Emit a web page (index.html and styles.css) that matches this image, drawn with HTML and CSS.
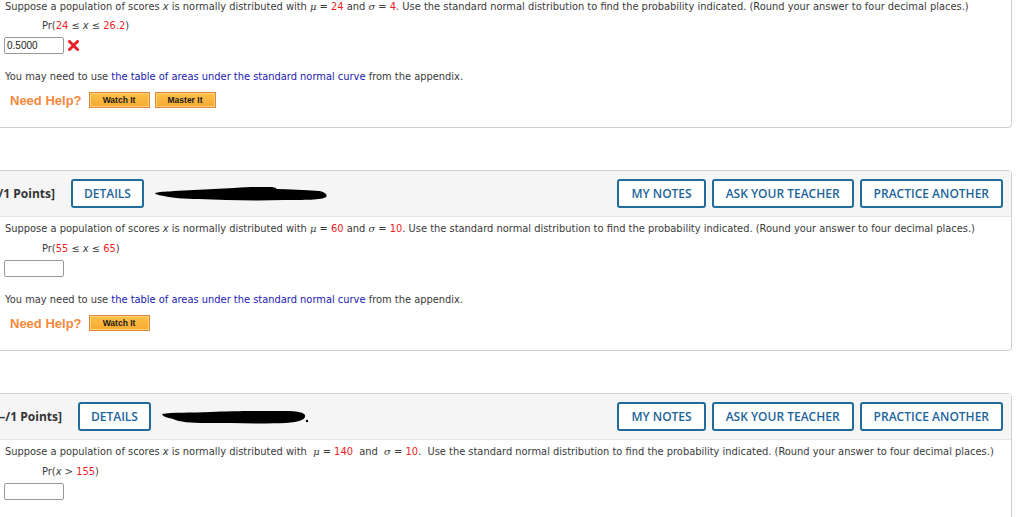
FILE: index.html
```html
<!DOCTYPE html>
<html>
<head>
<meta charset="utf-8">
<link rel="stylesheet" href="styles.css">
</head>
<body>
<div class="page">
  <section class="card card-first">
    <div class="body">
      <p class="q">Suppose a population of scores <i>x</i> is normally distributed with <i class="gr">μ</i> = <span class="red">24</span> and <i class="gr">σ</i> = <span class="red">4</span>. Use the standard normal distribution to find the probability indicated. (Round your answer to four decimal places.)</p>
      <p class="pr">Pr(<span class="red">24</span> ≤ <i>x</i> ≤ <span class="red">26.2</span>)</p>
      <div class="answer-row">
        <div class="answer">0.5000</div>
        <svg class="wrong" width="11" height="11" viewBox="0 0 11 11"><path d="M1.5 1.5 L9.5 9.5 M9.5 1.5 L1.5 9.5" stroke="#e8202a" stroke-width="3" stroke-linecap="round"/></svg>
      </div>
      <p class="note">You may need to use <a class="lnk">the table of areas under the standard normal curve</a> from the appendix.</p>
      <div class="help">
        <span class="help-label">Need Help?</span>
        <span class="hbtn">Watch It</span>
        <span class="hbtn">Master It</span>
      </div>
    </div>
  </section>

  <section class="card">
    <header class="head">
      <span class="points">8. [–/1 Points]</span>
      <span class="obtn details">DETAILS</span>
      <svg class="scribble" width="174" height="18" viewBox="0 0 174 18"><path d="M1 8 C8 6 14 7 20 6 C40 5 60 4 80 3 C95 2 105 2 115 2 C120 2 124 3 122 4 C135 4 150 5 165 6 C171 7 174 10 172 12 C168 15 150 15 130 15 C100 16 70 15 45 14 C30 14 18 13 10 11 C6 10 2 10 1 8 Z" fill="#000"/></svg>
      <span class="spacer"></span>
      <span class="obtn">MY NOTES</span>
      <span class="obtn">ASK YOUR TEACHER</span>
      <span class="obtn">PRACTICE ANOTHER</span>
    </header>
    <div class="body">
      <p class="q">Suppose a population of scores <i>x</i> is normally distributed with <i class="gr">μ</i> = <span class="red">60</span> and <i class="gr">σ</i> = <span class="red">10</span>. Use the standard normal distribution to find the probability indicated. (Round your answer to four decimal places.)</p>
      <p class="pr">Pr(<span class="red">55</span> ≤ <i>x</i> ≤ <span class="red">65</span>)</p>
      <div class="answer-row">
        <div class="answer"></div>
      </div>
      <p class="note">You may need to use <a class="lnk">the table of areas under the standard normal curve</a> from the appendix.</p>
      <div class="help">
        <span class="help-label">Need Help?</span>
        <span class="hbtn">Watch It</span>
      </div>
    </div>
  </section>

  <section class="card card-last">
    <header class="head">
      <span class="points points-wide">9. [–/1 Points]</span>
      <span class="obtn details">DETAILS</span>
      <svg class="scribble" width="150" height="18" viewBox="0 0 150 18"><path d="M1 6 C10 4 30 5 50 4 C70 3 100 3 125 3 C135 3 142 4 144 7 C145 11 140 14 125 15 C100 16 70 15 45 15 C30 15 18 14 12 11 C8 10 2 9 1 6 Z" fill="#000"/><circle cx="146" cy="13" r="1.2" fill="#000"/></svg>
      <span class="spacer"></span>
      <span class="obtn">MY NOTES</span>
      <span class="obtn">ASK YOUR TEACHER</span>
      <span class="obtn">PRACTICE ANOTHER</span>
    </header>
    <div class="body">
      <p class="q">Suppose a population of scores <i>x</i> is normally distributed with &nbsp;<i class="gr">μ</i> = <span class="red">140</span> &nbsp;and &nbsp;<i class="gr">σ</i> = <span class="red">10</span>. &nbsp;Use the standard normal distribution to find the probability indicated. (Round your answer to four decimal places.)</p>
      <p class="pr">Pr(<i>x</i> &gt; <span class="red">155</span>)</p>
      <div class="answer-row">
        <div class="answer"></div>
      </div>
    </div>
  </section>
</div>
</body>
</html>
```

FILE: styles.css
```css
html, body {
  margin: 0;
  padding: 0;
  background: #fff;
  overflow: hidden;
}
body {
  font-family: "DejaVu Sans", Verdana, sans-serif;
  color: #3a3a3a;
}
.page {
  display: flex;
  flex-direction: column;
}
.card {
  margin: 42px 12px 0 -10px;
  border: 1px solid #cfcfcf;
  border-radius: 4px;
  background: #fff;
}
.card-first {
  margin-top: -5px;
  border-top: none;
}
.head {
  display: flex;
  align-items: center;
  height: 45px;
  background: #f5f5f5;
  border-bottom: 1px solid #e4e4e4;
  padding: 0 8px 0 0;
  font-family: "Open Sans", sans-serif;
}
.points {
  font-weight: 700;
  font-size: 12px;
  color: #333;
  margin-left: -16px;
  white-space: nowrap;
}
.points-wide {
  margin-left: -9px;
}
.obtn {
  display: inline-flex;
  align-items: center;
  justify-content: center;
  height: 25px;
  padding: 0 12px;
  border: 2px solid #1f6c9c;
  border-radius: 3px;
  color: #1c659a;
  font-weight: 600;
  font-size: 12px;
  background: #fff;
  margin-left: 6px;
  white-space: nowrap;
}
.obtn.details {
  margin-left: 16px;
  padding: 0 11px;
}
.scribble {
  margin-left: 10px;
  display: block;
}
.spacer {
  flex: 1;
}
.body {
  padding: 4px 0 19px 14px;
}
.card-last .body {
  padding-bottom: 40px;
}
.q, .pr, .note {
  margin: 0;
  font-size: 9.9px;
  line-height: 16px;
  white-space: nowrap;
}
.pr {
  margin-top: 4px;
  padding-left: 37px;
}
.card-first .pr {
  margin-top: 3px;
}
.gr {
  font-family: "DejaVu Serif", serif;
}
.red {
  color: #ee1c24;
}
.answer-row {
  display: flex;
  align-items: center;
  margin-top: 3px;
  margin-left: -1px;
}
.answer {
  box-sizing: border-box;
  width: 60px;
  height: 17px;
  border: 1px solid #9a9a9a;
  border-radius: 2px;
  font-family: "Liberation Sans", Arial, sans-serif;
  font-size: 10px;
  line-height: 15px;
  padding-left: 2px;
  color: #222;
}
.wrong {
  margin-left: 4px;
  display: block;
}
.note {
  margin-top: 15px;
}
.lnk {
  color: #1a1ab0;
}
.help {
  display: flex;
  align-items: center;
  margin-top: 7px;
  height: 16px;
  padding-left: 5px;
}
.help-label {
  font-family: "Liberation Sans", Arial, sans-serif;
  font-weight: 700;
  font-size: 13px;
  color: #f5883a;
  margin-right: 7px;
}
.hbtn {
  box-sizing: border-box;
  display: inline-flex;
  align-items: center;
  justify-content: center;
  width: 61px;
  height: 16px;
  border: 1px solid #dc8636;
  box-shadow: inset 0 0 0 1px #ffd27a;
  background: linear-gradient(#fcc14a, #f7a930);
  font-family: "Liberation Sans", Arial, sans-serif;
  font-weight: 700;
  font-size: 8.5px;
  color: #1a1a1a;
  margin-right: 5px;
}
```
